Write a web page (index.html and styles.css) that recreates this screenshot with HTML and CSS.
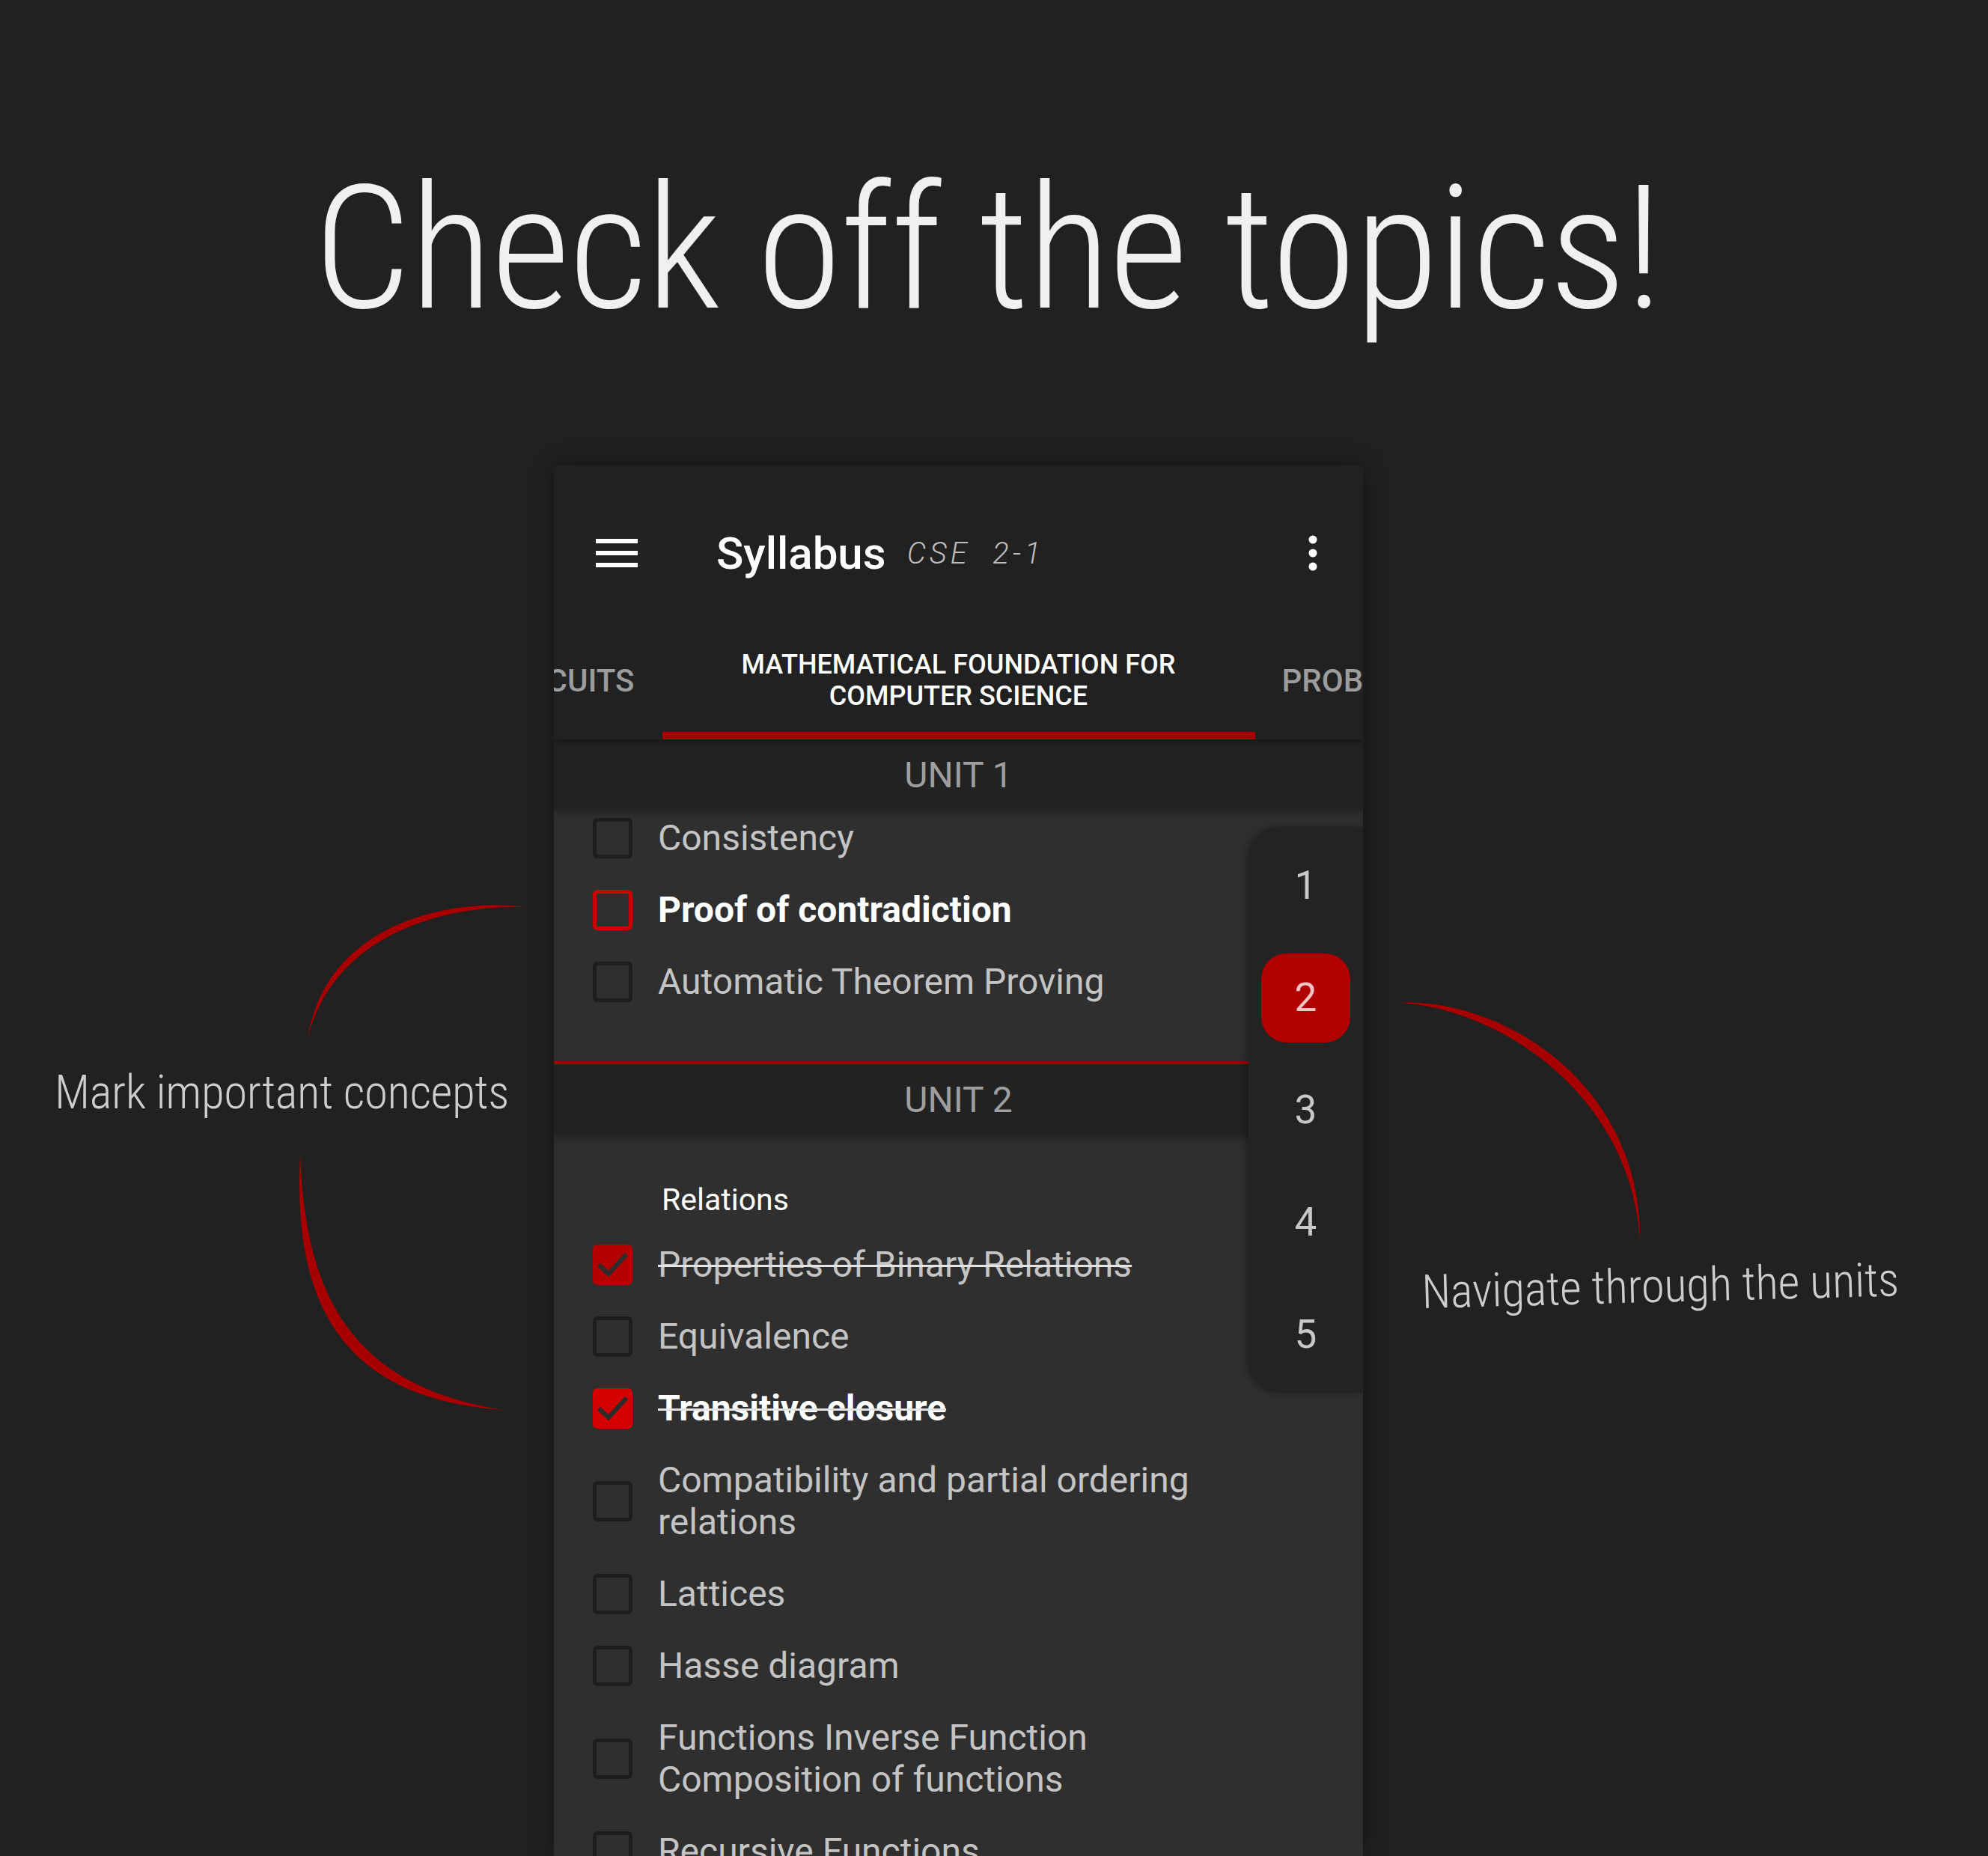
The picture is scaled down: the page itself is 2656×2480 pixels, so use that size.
FILE: index.html
```html
<!DOCTYPE html>
<html lang="en">
<head>
    <meta charset="UTF-8">
    <meta name="viewport" content="width=device-width, initial-scale=1.0">
    <title>Check off the topics</title>
    <link rel="stylesheet" href="styles.css">
</head>
<body>
    <div class="page">
        <h1 class="headline">Check off the topics!</h1>

        <div class="stage">
            <aside class="note note-left">
                <p>Mark important concepts</p>
            </aside>

            <div class="phone">
                <header class="appbar">
                    <div class="toolbar">
                        <svg class="menu-icon" viewBox="0 0 56 38" width="56" height="38">
                            <rect x="0" y="0" width="56" height="6"/>
                            <rect x="0" y="16" width="56" height="6"/>
                            <rect x="0" y="32" width="56" height="6"/>
                        </svg>
                        <span class="title">Syllabus</span>
                        <span class="subtitle">CSE  2-1</span>
                        <svg class="more-icon" viewBox="0 0 12 48" width="12" height="48">
                            <circle cx="6" cy="6" r="5.5"/>
                            <circle cx="6" cy="24" r="5.5"/>
                            <circle cx="6" cy="42" r="5.5"/>
                        </svg>
                    </div>
                    <nav class="tabs">
                        <div class="tab tab-side tab-left"><span>ELECTRONIC DEVICES &amp; CIRCUITS</span></div>
                        <div class="tab tab-active"><span>MATHEMATICAL FOUNDATION FOR<br>COMPUTER SCIENCE</span></div>
                        <div class="tab tab-side tab-right"><span>PROBABILITY &amp; STATISTICS</span></div>
                    </nav>
                </header>

                <section class="unit">
                    <div class="unit-head">UNIT 1</div>
                    <ul class="topics topics-first">
                        <li class="topic"><span class="box"></span><span class="label">Consistency</span></li>
                        <li class="topic important"><span class="box"></span><span class="label">Proof of contradiction</span></li>
                        <li class="topic"><span class="box"></span><span class="label">Automatic Theorem Proving</span></li>
                    </ul>
                </section>

                <section class="unit">
                    <div class="unit-head unit-head-current">UNIT 2</div>
                    <div class="subhead">Relations</div>
                    <ul class="topics">
                        <li class="topic done">
                            <span class="box"><svg class="tick" viewBox="0 0 53 54" width="53" height="54"><path d="M8 27 L21 39 L45 13"/></svg></span>
                            <span class="label">Properties of Binary Relations</span>
                        </li>
                        <li class="topic"><span class="box"></span><span class="label">Equivalence</span></li>
                        <li class="topic important done">
                            <span class="box"><svg class="tick" viewBox="0 0 53 54" width="53" height="54"><path d="M8 27 L21 39 L45 13"/></svg></span>
                            <span class="label">Transitive closure</span>
                        </li>
                        <li class="topic"><span class="box"></span><span class="label">Compatibility and partial ordering relations</span></li>
                        <li class="topic"><span class="box"></span><span class="label">Lattices</span></li>
                        <li class="topic"><span class="box"></span><span class="label">Hasse diagram</span></li>
                        <li class="topic"><span class="box"></span><span class="label">Functions Inverse Function Composition of functions</span></li>
                        <li class="topic"><span class="box"></span><span class="label">Recursive Functions</span></li>
                    </ul>
                </section>

                <ol class="unit-nav">
                    <li><span>1</span></li>
                    <li class="current"><span>2</span></li>
                    <li><span>3</span></li>
                    <li><span>4</span></li>
                    <li><span>5</span></li>
                </ol>
            </div>

            <aside class="note note-right">
                <p>Navigate through the units</p>
            </aside>
        </div>

        <!-- brush strokes pointing at the callouts -->
        <svg class="strokes" viewBox="0 0 2656 2480" width="2656" height="2480">
            <path d="M705 1212 C599 1199 435 1234 411 1388 C446 1244 601 1209 705 1212 Z"/>
            <path d="M401 1544 C392 1725 443 1869 674 1884 C457 1851 408 1715 401 1544 Z"/>
            <path d="M1871 1340 C2004 1333 2193 1446 2191 1657 C2177 1455 1996 1347 1871 1340 Z"/>
        </svg>
    </div>
</body>
</html>
```

FILE: styles.css
```css
body {
    margin: 0;
    background: #212121;
    font-family: Roboto, "Noto Sans", sans-serif;
    color: #c4c4c4;
}

.page {
    position: relative;
    width: 2656px;
    height: 2480px;
    overflow: hidden;
}

.headline {
    margin: 0;
    padding: 218px 18px 0 0;
    font-family: "Roboto Condensed", Roboto, sans-serif;
    font-stretch: condensed;
    font-weight: 300;
    font-size: 230px;
    line-height: 1;
    letter-spacing: -1.6px;
    color: #f0f0f0;
    text-align: center;
}

.stage {
    display: grid;
    grid-template-columns: 740px 1081px 1fr;
    margin-top: 174px;
}

/* callout texts */
.note p {
    margin: 0;
    font-family: "Roboto Condensed", Roboto, sans-serif;
    font-stretch: condensed;
    font-weight: 300;
    line-height: 1;
    color: #cdcdcd;
    white-space: nowrap;
}

.note-left {
    padding: 806px 0 0 73px;
}

.note-left p {
    font-size: 63px;
    letter-spacing: -0.4px;
}

.note-right {
    padding: 1073px 0 0 79px;
}

.note-right p {
    font-size: 63px;
    letter-spacing: -0.3px;
    transform: rotate(-1.5deg);
    transform-origin: 0 85%;
}

.strokes {
    position: absolute;
    top: 0;
    left: 0;
    pointer-events: none;
}

.strokes path {
    fill: #a80000;
}

/* phone screen */
.phone {
    position: relative;
    height: 1858px;
    background: #2f2f2f;
    overflow: hidden;
    box-shadow: 0 0 28px rgba(0, 0, 0, 0.45);
}

.appbar {
    position: relative;
    z-index: 2;
    background: #212121;
    box-shadow: 0 4px 8px rgba(0, 0, 0, 0.3);
}

.toolbar {
    display: flex;
    align-items: center;
    height: 234px;
    padding: 0 61px 0 56px;
}

.menu-icon {
    fill: #fff;
    margin-right: 105px;
}

.title {
    font-size: 60px;
    font-weight: 500;
    color: #fff;
}

.subtitle {
    margin-left: 28px;
    font-size: 40px;
    font-style: italic;
    font-weight: 300;
    letter-spacing: 5px;
    white-space: pre;
    color: #bdbdbd;
}

.more-icon {
    fill: #fff;
    margin-left: auto;
}

.tabs {
    display: grid;
    grid-template-columns: 1fr 792px 1fr;
    height: 132px;
}

.tab {
    display: flex;
    align-items: center;
    padding-bottom: 16px;
    border-bottom: 10px solid transparent;
    overflow: hidden;
    font-weight: 500;
    text-transform: uppercase;
    white-space: nowrap;
}

.tab-side {
    font-size: 42px;
    color: #9c9c9c;
}

.tab-left {
    justify-content: flex-end;
    padding-right: 37px;
}

.tab-right {
    justify-content: flex-start;
    padding-left: 36px;
}

.tab-active {
    justify-content: center;
    border-bottom-color: #a80000;
    font-size: 36px;
    line-height: 42px;
    color: #fff;
    text-align: center;
}

/* unit sections */
.unit-head {
    position: relative;
    z-index: 1;
    height: 94px;
    display: flex;
    align-items: center;
    justify-content: center;
    background: #222;
    box-shadow: 0 5px 9px rgba(0, 0, 0, 0.25);
    font-size: 48px;
    color: #9e9e9e;
}

.unit-head-current {
    height: 95px;
    border-top: 4px solid #a00000;
}

.topics {
    list-style: none;
    margin: 0;
    padding: 0;
}

.topics-first {
    margin-top: -10px;
    padding-bottom: 58px;
}

.subhead {
    margin: 58px 0 11px;
    padding-left: 144px;
    font-size: 41px;
    line-height: 56px;
    color: #fff;
}

.topic {
    display: flex;
    align-items: center;
    gap: 34px;
    padding: 20px 160px 20px 52px;
    font-size: 48px;
    line-height: 56px;
}

.box {
    flex: none;
    width: 53px;
    height: 54px;
    box-sizing: border-box;
    border: 5px solid #1d1d1d;
    border-radius: 6px;
}

.important .box {
    border-color: #cc0000;
}

.important .label {
    font-weight: 700;
    color: #fff;
}

.done .box {
    border: 0;
    background: #b30000;
}

.important.done .box {
    background: #d40000;
}

.tick {
    display: block;
    fill: none;
    stroke: #2c2c2c;
    stroke-width: 6;
}

.done .label {
    text-decoration: line-through;
    text-decoration-thickness: 3px;
    text-decoration-color: #e4e4e4;
}

/* floating unit navigator */
.unit-nav {
    position: absolute;
    top: 483px;
    right: 0;
    z-index: 3;
    width: 153px;
    margin: 0;
    padding: 3px 0;
    list-style: none;
    background: #232323;
    border-radius: 42px 0 0 42px;
    box-shadow: -3px 0 10px rgba(0, 0, 0, 0.3);
}

.unit-nav li {
    height: 150px;
    display: flex;
    align-items: center;
    justify-content: center;
}

.unit-nav span {
    width: 119px;
    height: 119px;
    display: flex;
    align-items: center;
    justify-content: center;
    border-radius: 34px;
    font-size: 53px;
    color: #c8c8c8;
}

.unit-nav .current span {
    background: #b00000;
    color: #f3c4c4;
}
```
